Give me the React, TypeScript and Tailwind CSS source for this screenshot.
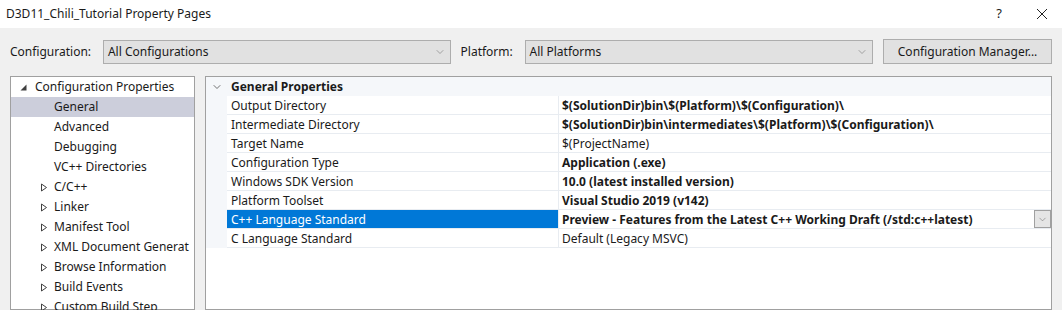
import { ChevronDown } from "lucide-react";

const treeItems = [
  { name: "General", depth: 1, selected: true },
  { name: "Advanced", depth: 1 },
  { name: "Debugging", depth: 1 },
  { name: "VC++ Directories", depth: 1 },
  { name: "C/C++", depth: 1, collapsed: true },
  { name: "Linker", depth: 1, collapsed: true },
  { name: "Manifest Tool", depth: 1, collapsed: true },
  { name: "XML Document Generat", depth: 1, collapsed: true },
  { name: "Browse Information", depth: 1, collapsed: true },
  { name: "Build Events", depth: 1, collapsed: true },
  { name: "Custom Build Step", depth: 1, collapsed: true },
];

const props = [
  { name: "Output Directory", value: "$(SolutionDir)bin\\$(Platform)\\$(Configuration)\\", bold: true },
  { name: "Intermediate Directory", value: "$(SolutionDir)bin\\intermediates\\$(Platform)\\$(Configuration)\\", bold: true },
  { name: "Target Name", value: "$(ProjectName)", bold: false },
  { name: "Configuration Type", value: "Application (.exe)", bold: true },
  { name: "Windows SDK Version", value: "10.0 (latest installed version)", bold: true },
  { name: "Platform Toolset", value: "Visual Studio 2019 (v142)", bold: true },
  { name: "C++ Language Standard", value: "Preview - Features from the Latest C++ Working Draft (/std:c++latest)", bold: true, selected: true },
  { name: "C Language Standard", value: "Default (Legacy MSVC)", bold: false },
];

function Combo({ label, width }: { label: string; width: string }) {
  return (
    <div className={`${width} h-[24px] border border-[#adadad] bg-[#e1e1e1] flex items-center justify-between pl-[4px] pr-[4px]`}>
      <span>{label}</span>
      <ChevronDown size={12} strokeWidth={1} className="text-[#606060]" />
    </div>
  );
}

function Collapsed() {
  return (
    <svg width="8" height="9" viewBox="0 0 8 9" className="shrink-0">
      <path d="M1.5 1 L6.5 4.5 L1.5 8 Z" fill="none" stroke="#404040" strokeWidth="1" />
    </svg>
  );
}

function Expanded() {
  return (
    <svg width="7" height="7" viewBox="0 0 7 7" className="shrink-0">
      <path d="M6.5 0.5 L6.5 6.5 L0.5 6.5 Z" fill="#404040" />
    </svg>
  );
}

export default function App() {
  return (
    <div
      className="w-[1062px] h-[310px] overflow-hidden bg-[#f0f0f0] text-[12px] text-[#1a1a1a] flex flex-col"
      style={{ fontFamily: '"Noto Sans", "Liberation Sans", sans-serif' }}
    >
      <div className="h-[28px] bg-white flex items-center justify-between shrink-0">
        <span className="pl-[6px] text-[12px]">D3D11_Chili_Tutorial Property Pages</span>
        <div className="flex items-center gap-[34px] pr-[14px]">
          <span className="text-[13px]">?</span>
          <svg width="12" height="12" viewBox="0 0 12 12">
            <path d="M1 1 L11 11 M11 1 L1 11" stroke="#222" strokeWidth="1" />
          </svg>
        </div>
      </div>

      <div className="h-[48px] flex items-center px-[10px] shrink-0">
        <span className="w-[93px]">Configuration:</span>
        <Combo label="All Configurations" width="w-[348px]" />
        <span className="ml-[10px] w-[64px]">Platform:</span>
        <Combo label="All Platforms" width="w-[349px]" />
        <button className="ml-[10px] w-[169px] h-[25px] border border-[#adadad] bg-[#e1e1e1] -mt-[1px]">
          Configuration Manager...
        </button>
      </div>

      <div className="flex-1 flex gap-[10px] px-[10px] min-h-0">
        <div className="w-[185px] border border-[#a0a0a0] bg-white flex flex-col">
          <div className="h-[20px] flex items-center pl-[9px] gap-[8px] shrink-0">
            <Expanded />
            <span>Configuration Properties</span>
          </div>
          {treeItems.map((t) => (
            <div
              key={t.name}
              className={`h-[20px] flex items-center shrink-0 whitespace-nowrap overflow-hidden ${t.selected ? "bg-[#cccedb]" : ""}`}
            >
              <span className="w-[43px] flex justify-end pr-[6px] shrink-0">{t.collapsed ? <Collapsed /> : null}</span>
              <span>{t.name}</span>
            </div>
          ))}
        </div>

        <div className="flex-1 border border-[#a0a0a0] bg-white flex flex-col">
          <div className="h-[19px] flex items-center bg-[#f5f7fa] shrink-0 pt-[1px]">
            <span className="w-[21px] flex justify-center">
              <ChevronDown size={12} strokeWidth={1.5} className="text-[#444]" />
            </span>
            <span className="pl-[4px] font-bold">General Properties</span>
          </div>
          {props.map((p) => (
            <div key={p.name} className="h-[19px] flex shrink-0">
              <div className="w-[21px] bg-[#f5f7fa]" />
              <div className="flex-1 flex border-b border-[#e8ecf1]">
                <div
                  className={`w-[332px] pl-[4px] pt-[1px] flex items-center border-r border-[#e8ecf1] ${p.selected ? "bg-[#0078d7] text-white" : ""}`}
                >
                  {p.name}
                </div>
                <div className={`flex-1 pl-[3px] flex items-center justify-between ${p.bold ? "font-bold" : ""}`}>
                  <span className="whitespace-nowrap pt-[1px]">{p.value}</span>
                  {p.selected ? (
                    <span className="w-[17px] h-[18px] border border-[#a0a0a0] bg-[#e5e5e5] flex items-center justify-center">
                      <ChevronDown size={11} strokeWidth={1} className="text-[#555]" />
                    </span>
                  ) : null}
                </div>
              </div>
            </div>
          ))}
        </div>
      </div>
    </div>
  );
}
